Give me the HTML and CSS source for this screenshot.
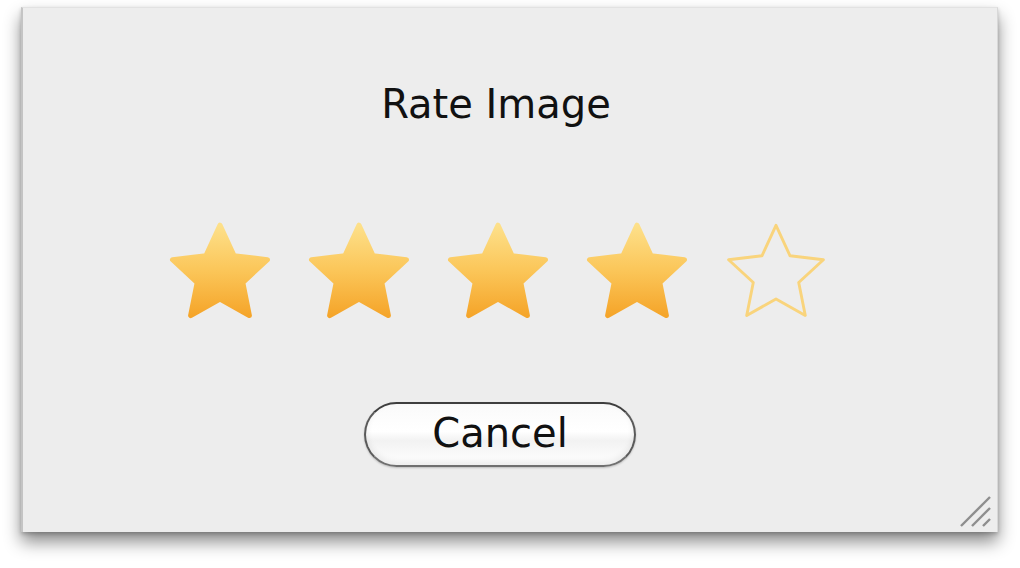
FILE: index.html
```html
<!DOCTYPE html>
<html lang="en">
<head>
  <meta charset="UTF-8" />
  <title>Rate Image</title>
  <link rel="stylesheet" href="styles.css">
</head>
<body>
  <div class="window">
    <h2 class="title">Rate Image</h2>

    <div class="stars">
      <svg class="star" viewBox="0 0 104 98"><path class="full" d="M52 4 L65.52 33.4 L97.65 37.17 L73.87 59.1 L80.21 90.83 L52 75 L23.79 90.83 L30.13 59.1 L6.35 37.17 L38.48 33.4 Z"/></svg>
      <svg class="star" viewBox="0 0 104 98"><path class="full" d="M52 4 L65.52 33.4 L97.65 37.17 L73.87 59.1 L80.21 90.83 L52 75 L23.79 90.83 L30.13 59.1 L6.35 37.17 L38.48 33.4 Z"/></svg>
      <svg class="star" viewBox="0 0 104 98"><path class="full" d="M52 4 L65.52 33.4 L97.65 37.17 L73.87 59.1 L80.21 90.83 L52 75 L23.79 90.83 L30.13 59.1 L6.35 37.17 L38.48 33.4 Z"/></svg>
      <svg class="star" viewBox="0 0 104 98"><path class="full" d="M52 4 L65.52 33.4 L97.65 37.17 L73.87 59.1 L80.21 90.83 L52 75 L23.79 90.83 L30.13 59.1 L6.35 37.17 L38.48 33.4 Z"/></svg>
      <svg class="star" viewBox="0 0 104 98"><path class="empty" d="M52 4 L65.52 33.4 L97.65 37.17 L73.87 59.1 L80.21 90.83 L52 75 L23.79 90.83 L30.13 59.1 L6.35 37.17 L38.48 33.4 Z"/></svg>
      <!-- shared gradient for the filled stars -->
      <svg class="defs" width="0" height="0">
        <defs>
          <linearGradient id="gold" x1="0" y1="0" x2="0" y2="1">
            <stop offset="0" stop-color="#fde08a"/>
            <stop offset="0.5" stop-color="#fbc659"/>
            <stop offset="1" stop-color="#f5a52a"/>
          </linearGradient>
        </defs>
      </svg>
    </div>

    <button class="btn">Cancel</button>

    <svg class="grip" viewBox="0 0 36 36">
      <line x1="4" y1="33" x2="33" y2="4"/>
      <line x1="15" y1="33" x2="33" y2="15"/>
      <line x1="26" y1="33" x2="33" y2="26"/>
    </svg>
  </div>
</body>
</html>
```

FILE: styles.css
```css
/* Base */
html {
  background: #fff;
}

body {
  margin: 0;
  padding-bottom: 30px;
  font-family: "DejaVu Sans", Verdana, sans-serif;
  color: #111;
}

/* Dialog window */
.window {
  position: relative;
  box-sizing: border-box;
  width: 977px;
  height: 525px;
  margin: 7px 0 0 21px;
  padding: 72px 28px 0 0;
  background: #ededed;
  border-left: 2px solid #c4c4c4;
  border-top: 1px solid #e2e2e2;
  border-right: 1px solid #d8d8d8;
  box-shadow: 0 10px 16px rgba(0, 0, 0, 0.45), 0 2px 4px rgba(0, 0, 0, 0.2);
  display: flex;
  flex-direction: column;
  align-items: center;
}

.title {
  margin: 0;
  font-size: 40px;
  font-weight: normal;
  line-height: 48px;
}

/* Rating row */
.stars {
  display: flex;
  gap: 31px;
  margin-top: 92px;
  margin-left: 4px;
}

.star {
  width: 108px;
  height: 104px;
}

.full {
  fill: url(#gold);
  stroke: url(#gold);
  stroke-width: 5;
  stroke-linejoin: round;
}

.empty {
  fill: none;
  stroke: #f9d47c;
  stroke-width: 2.8;
  stroke-linejoin: round;
}

.defs {
  position: absolute;
}

/* Aqua style pill button */
.btn {
  margin-top: 78px;
  margin-left: 8px;
  width: 272px;
  height: 65px;
  border: 2px solid #5a5a5a;
  border-top-color: #3e3e3e;
  border-bottom-color: #707070;
  border-radius: 33px;
  background: linear-gradient(#fafafa 0%, #ffffff 45%, #f2f2f2 60%, #ffffff 100%);
  box-shadow: inset 0 -3px 6px rgba(0, 0, 0, 0.08), 0 1px 2px rgba(0, 0, 0, 0.2);
  font-family: "DejaVu Sans", Verdana, sans-serif;
  font-size: 40px;
  color: #111;
  padding: 0 0 4px;
}

/* Resize grip */
.grip {
  position: absolute;
  right: 4px;
  bottom: 3px;
  width: 36px;
  height: 36px;
}

.grip line {
  stroke: #8e8e8e;
  stroke-width: 2.4;
}
```
